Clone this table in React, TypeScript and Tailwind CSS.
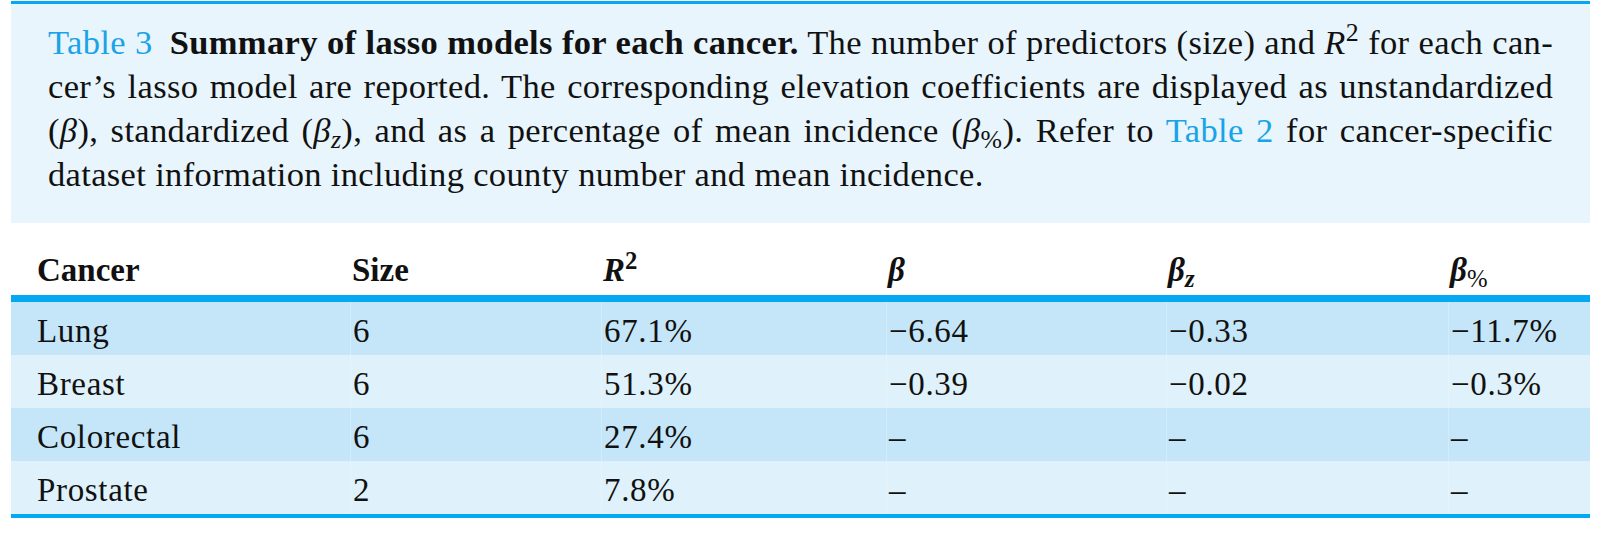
import React from "react";

const rows: string[][] = [
  ["Lung", "6", "67.1%", "−6.64", "−0.33", "−11.7%"],
  ["Breast", "6", "51.3%", "−0.39", "−0.02", "−0.3%"],
  ["Colorectal", "6", "27.4%", "–", "–", "–"],
  ["Prostate", "2", "7.8%", "–", "–", "–"],
];

const cols = "grid grid-cols-[339px_251px_285px_280px_282px_142px]";

export default function App() {
  return (
    <div className="w-[1600px] h-[536px] bg-white pl-[11px] pr-[10px] pt-[1px] font-['Liberation_Serif','Times_New_Roman',serif] text-[#111]">
      {/* Caption */}
      <div className="border-t-[3px] border-[#05a8f3] bg-[#e8f5fc] h-[222px] px-[37px] pt-[16px] text-[34.5px] leading-[44px] tracking-[0.01em]">
        <div className="text-justify [text-align-last:justify]">
          <span className="text-[#1ba3e8] mr-[8px]">Table 3</span>{" "}
          <span className="font-bold">Summary of lasso models for each cancer.</span> The number of predictors (size) and{" "}
          <i>R</i>
          <sup>2</sup> for each can-
        </div>
        <div className="text-justify [text-align-last:justify]">
          cer’s lasso model are reported. The corresponding elevation coefficients are displayed as unstandardized
        </div>
        <div className="text-justify [text-align-last:justify]">
          (<i>β</i>), standardized (<i>β</i>
          <sub>
            <i>z</i>
          </sub>
          ), and as a percentage of mean incidence (<i>β</i>
          <sub>%</sub>). Refer to <span className="text-[#1ba3e8]">Table 2</span> for cancer-specific
        </div>
        <div>dataset information including county number and mean incidence.</div>
      </div>

      {/* Table */}
      <div className="text-[33px] tracking-[0.02em]">
        <div className={`${cols} h-[79px] items-end pb-[8px] leading-none border-b-[7px] border-[#05a8f3] font-bold tracking-normal`}>
          <div className="pl-[26px]">Cancer</div>
          <div className="pl-[2px]">Size</div>
          <div className="pl-[2px]">
            <i>R</i>
            <sup>2</sup>
          </div>
          <div className="pl-[2px]">
            <i>β</i>
          </div>
          <div className="pl-[2px]">
            <i>β</i>
            <sub>
              <i>z</i>
            </sub>
          </div>
          <div className="pl-[2px]">
            <i>β</i>
            <sub className="font-normal">%</sub>
          </div>
        </div>
        {rows.map((r, i) => (
          <div
            key={r[0]}
            className={`${cols} h-[53px] items-center leading-none ${i % 2 === 0 ? "bg-[#c5e6f8]" : "bg-[#dff1fa]"}`}
          >
            {r.map((c, j) => (
              <div
                key={j}
                className={`h-full flex items-center pt-[5px] ${j === 0 ? "pl-[26px]" : "pl-[2px] border-l border-white/25"}`}
              >
                {c}
              </div>
            ))}
          </div>
        ))}
        <div className="h-[4px] bg-[#05a8f3]" />
      </div>
    </div>
  );
}
